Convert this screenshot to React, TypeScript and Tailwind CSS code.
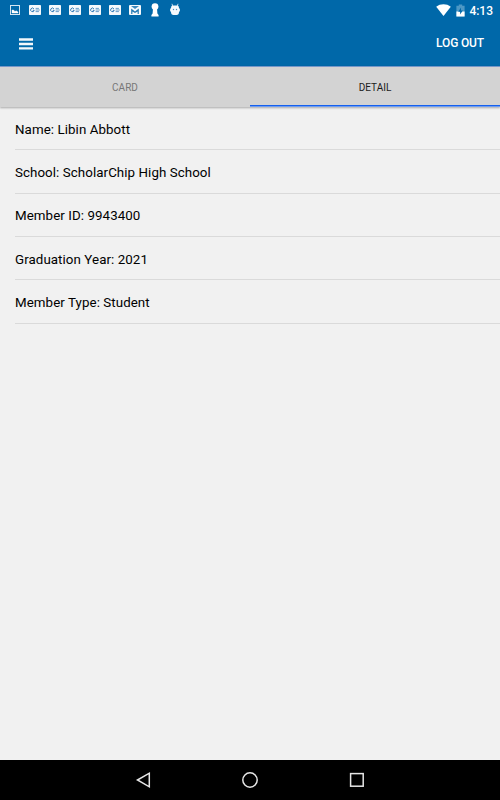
import type { ReactNode } from 'react';
import clsx from 'clsx';

const details = [
  { label: 'Name', value: 'Libin Abbott' },
  { label: 'School', value: 'ScholarChip High School' },
  { label: 'Member ID', value: '9943400' },
  { label: 'Graduation Year', value: '2021' },
  { label: 'Member Type', value: 'Student' },
];

function PictureIcon() {
  return (
    <svg width="12" height="12" viewBox="0 0 12 12" aria-hidden="true">
      <rect x="1.5" y="1.5" width="9" height="9" fill="none" stroke="#d3e5f1" />
      <path d="M3 9V6L4.5 6L6 7.5L7.2 6.8L9 8V9Z" fill="#fff" stroke="#fff" strokeWidth="0.4" />
    </svg>
  );
}

function NewsIcon() {
  return (
    <svg width="12" height="12" viewBox="0 0 12 12" aria-hidden="true">
      <rect y="1" width="12" height="10" rx="0.8" fill="#f5f9fc" />
      <path d="M4.9 4.8A1.8 1.8 0 1 0 5.2 6.3H3.8" fill="none" stroke="#2e79b5" strokeWidth="1" />
      <path d="M6.6 4.4H9.9M6.6 6H10.8M6.6 7.6H9.9" stroke="#5a93c3" strokeWidth="0.9" />
    </svg>
  );
}

function MailIcon() {
  return (
    <svg width="12" height="12" viewBox="0 0 12 12" aria-hidden="true">
      <rect y="1" width="12" height="10" rx="1" fill="#f5f9fc" />
      <path d="M2 2H10L6 5Z" fill="#3d89bd" />
      <path d="M2.2 4.4L6 7.4L9.8 4.4V10H2.2Z" fill="#1f77b2" />
      <path d="M3.4 10V7.5L6 9L8.6 7.5V10Z" fill="#f5f9fc" />
    </svg>
  );
}

function KeyholeIcon() {
  return (
    <svg width="12" height="14" viewBox="0 0 12 14" aria-hidden="true">
      <circle cx="6" cy="3.6" r="3.4" fill="#fff" />
      <path d="M4 5.5H8L8.4 10.5L9.6 12V13.5H2.4V12L3.6 10.5Z" fill="#fff" />
    </svg>
  );
}

function DroidIcon() {
  return (
    <svg width="12" height="14" viewBox="0 0 12 14" aria-hidden="true">
      <path d="M3 0.8L3.6 3M9 0.8L8.4 3" stroke="#d5e5f1" strokeWidth="0.9" />
      <path d="M2 4.5Q2 2.5 4 2.5H8Q10 2.5 10 4.5V9Q10 12 7.5 12H4.5Q2 12 2 9Z" fill="#f5f9fc" />
      <path d="M1.5 5.5V8.5M10.5 5.5V8.5" stroke="#d5e5f1" />
      <circle cx="4.5" cy="6.5" r="0.7" fill="#4b92c3" />
      <circle cx="7.5" cy="6.5" r="0.7" fill="#4b92c3" />
    </svg>
  );
}

function WifiIcon() {
  return (
    <svg width="15" height="12" viewBox="0 0 15 12" aria-hidden="true">
      <path d="M0.2 2.7C4.2-.6 10.8-.6 14.8 2.7L7.5 12Z" fill="#fff" />
    </svg>
  );
}

function BatteryIcon() {
  return (
    <svg width="9" height="13" viewBox="0 0 9 13" aria-hidden="true">
      <path d="M2.8 0.5H6.2V1.8H8.6V12.5H0.4V1.8H2.8Z" fill="#4d98c5" />
      <path d="M0.4 7.5H8.6V12.5H0.4Z" fill="#fff" />
      <path d="M5 3.6L2.2 7.7H4.1V10.6L6.8 6.6H5Z" fill="#0068a9" />
    </svg>
  );
}

function MenuIcon() {
  return (
    <svg width="14" height="12" viewBox="0 0 14 12" aria-hidden="true">
      <path d="M0 1.5H14M0 6H14M0 10.3H14" stroke="#f2f7fb" strokeWidth="2.3" />
    </svg>
  );
}

interface TabProps {
  active?: boolean;
  children: ReactNode;
}

function Tab({ active = false, children }: TabProps) {
  return (
    <button
      type="button"
      role="tab"
      aria-selected={active}
      className={clsx(
        'flex-1 border-b pt-[3px] text-[10px] leading-3',
        active
          ? 'border-[#6f9cf0] text-[#1c1c1c] shadow-[inset_0_-1px_0_#1560ee]'
          : 'border-transparent text-[#777777]'
      )}
    >
      {children}
    </button>
  );
}

export default function App() {
  return (
    <div className="flex h-[800px] w-[500px] flex-col overflow-hidden bg-[#f1f1f1] font-['Roboto',sans-serif]">
      <header className="h-[66px] shrink-0 bg-[#0068a9] text-white">
        <div className="flex h-5 items-center justify-between pl-[9px] pr-[7px]">
          <div className="flex items-center gap-2">
            <PictureIcon />
            {[0, 1, 2, 3, 4].map((n) => (
              <NewsIcon key={n} />
            ))}
            <MailIcon />
            <KeyholeIcon />
            <DroidIcon />
          </div>
          <div className="flex items-center">
            <WifiIcon />
            <span className="ml-[5px] mr-1">
              <BatteryIcon />
            </span>
            <span className="pt-px text-[12px] font-medium leading-5">4:13</span>
          </div>
        </div>
        <div className="flex h-[46px] items-center justify-between pl-[19px] pr-4">
          <button type="button" aria-label="Menu" className="pt-px">
            <MenuIcon />
          </button>
          <button type="button" className="text-[12px] font-medium leading-5 tracking-[-0.15px]">
            LOG OUT
          </button>
        </div>
      </header>

      <div
        role="tablist"
        className="flex h-[41px] shrink-0 border-t border-[#7597c9] bg-[#d3d3d3] shadow-[0_1px_2px_rgba(0,0,0,0.3)]"
      >
        <Tab>CARD</Tab>
        <Tab active>DETAIL</Tab>
      </div>

      <main className="flex-1">
        <ul className="pl-[15px]">
          {details.map(({ label, value }) => (
            <li
              key={label}
              className="flex h-[43.33px] items-center border-b border-[#dadada] pt-[2.8px] text-[13.33px] leading-5 tracking-[0.07px] text-black"
            >
              {label}: {value}
            </li>
          ))}
        </ul>
      </main>

      <nav className="flex h-10 shrink-0 items-center justify-center bg-black">
        <svg width="240" height="20" viewBox="0 0 240 20" fill="none" stroke="#e6e6e6" strokeWidth="1.5" aria-hidden="true">
          <path d="M7.5 10L19.3 3.2V16.8Z" />
          <circle cx="120" cy="10" r="7.2" />
          <rect x="220.6" y="3.6" width="12.6" height="12.6" />
        </svg>
      </nav>
    </div>
  );
}
